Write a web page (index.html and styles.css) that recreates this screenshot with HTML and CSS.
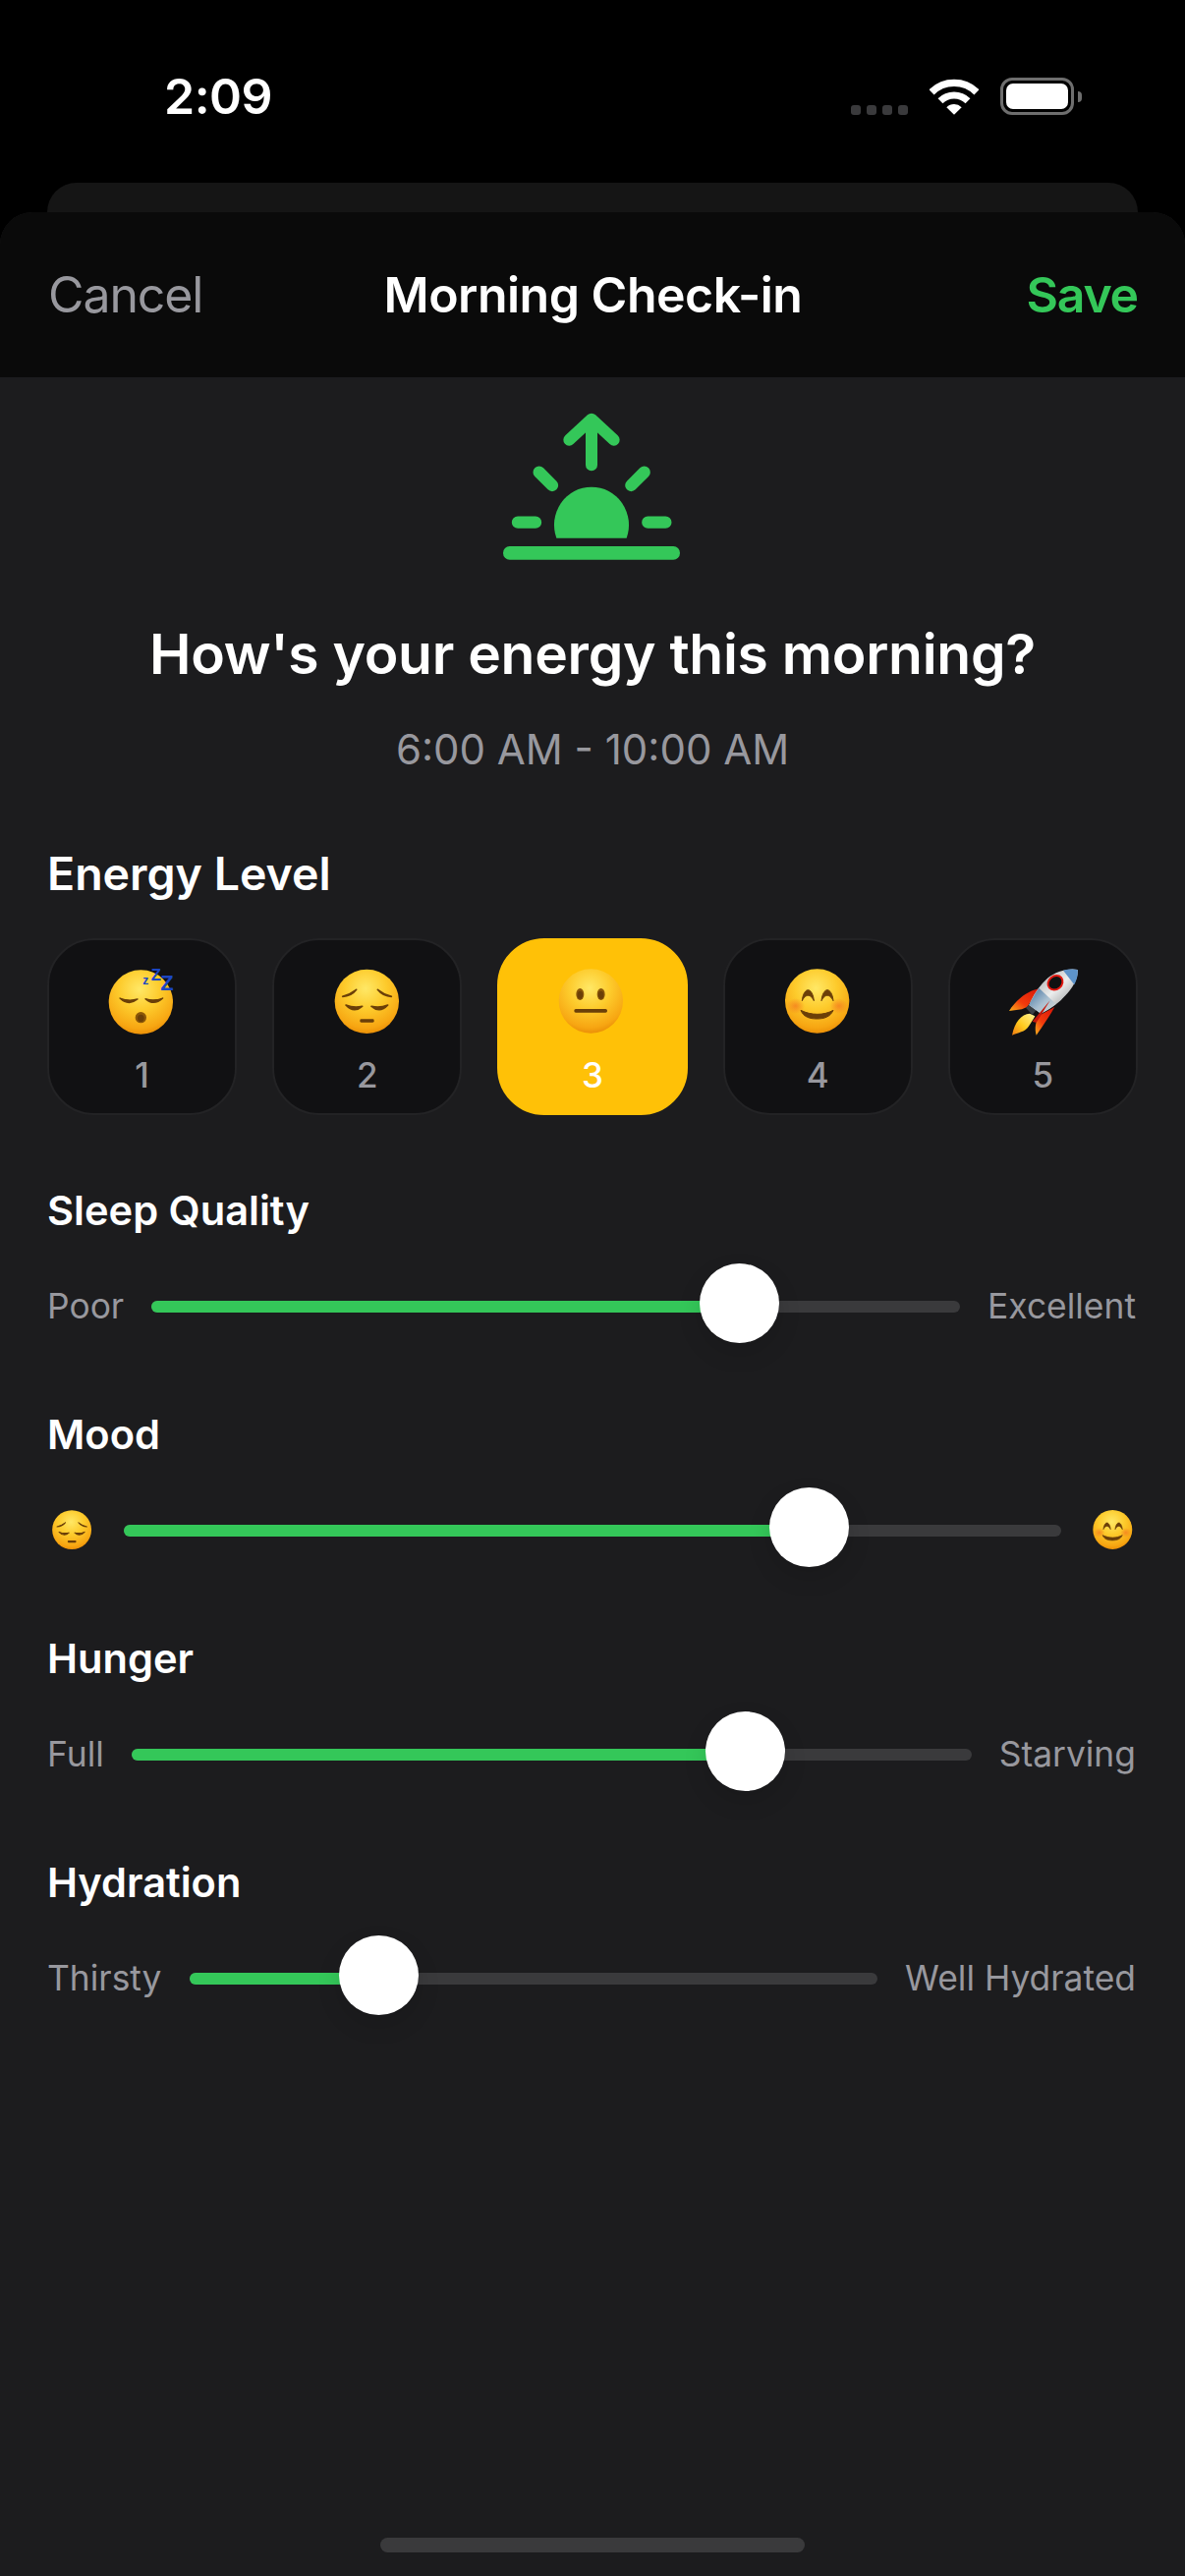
FILE: index.html
```html
<!DOCTYPE html>
<html lang="en">
<head>
    <meta charset="UTF-8">
    <meta name="viewport" content="width=device-width, initial-scale=1.0">
    <title>Morning Check-in</title>
    <link rel="stylesheet" href="styles.css">
</head>
<body>
    <svg class="defs" width="0" height="0" aria-hidden="true">
        <defs>
            <radialGradient id="faceFill" cx="48%" cy="30%" r="72%">
                <stop offset="0" stop-color="#ffe866"/>
                <stop offset="0.45" stop-color="#fdcb2c"/>
                <stop offset="0.85" stop-color="#f7a612"/>
                <stop offset="1" stop-color="#e98b05"/>
            </radialGradient>
            <radialGradient id="blush" cx="50%" cy="50%" r="50%">
                <stop offset="0" stop-color="#f47a20" stop-opacity="0.75"/>
                <stop offset="1" stop-color="#f47a20" stop-opacity="0"/>
            </radialGradient>
            <linearGradient id="rocketSilver" x1="0" y1="0" x2="1" y2="1">
                <stop offset="0" stop-color="#8d8f91"/>
                <stop offset="0.5" stop-color="#eceded"/>
                <stop offset="1" stop-color="#74787a"/>
            </linearGradient>
            <linearGradient id="rocketBlue" x1="0" y1="0" x2="1" y2="1">
                <stop offset="0" stop-color="#3f6f9e"/>
                <stop offset="0.55" stop-color="#a9bfd0"/>
                <stop offset="1" stop-color="#d8d8d4"/>
            </linearGradient>
            <linearGradient id="finFill" x1="1" y1="0" x2="0" y2="1">
                <stop offset="0" stop-color="#d81408"/>
                <stop offset="0.6" stop-color="#f23b0c"/>
                <stop offset="1" stop-color="#fbb21c"/>
            </linearGradient>
            <linearGradient id="flameFill" x1="1" y1="0" x2="0" y2="1">
                <stop offset="0" stop-color="#fff39a"/>
                <stop offset="0.55" stop-color="#ffcc1e"/>
                <stop offset="1" stop-color="#f07a10"/>
            </linearGradient>

            <symbol id="faceSleep" viewBox="0 0 270 255">
                <circle cx="130" cy="135" r="98" fill="url(#faceFill)"/>
                <path d="M66 123Q92 148 120 126Q92 134 66 123Z" fill="#6b3f08" stroke="#6b3f08" stroke-width="4" stroke-linejoin="round"/>
                <path d="M144 125Q170 148 197 123Q170 134 144 125Z" fill="#6b3f08" stroke="#6b3f08" stroke-width="4" stroke-linejoin="round"/>
                <ellipse cx="130" cy="182" rx="17" ry="17" fill="#8a5608"/>
                <ellipse cx="130" cy="184" rx="10" ry="11" fill="#6b3f08"/>
                <text class="zzz" x="136" y="80" font-size="36">z</text>
                <text class="zzz" x="161" y="68" font-size="50">Z</text>
                <text class="zzz" x="190" y="98" font-size="66">Z</text>
            </symbol>

            <symbol id="facePensive" viewBox="-5 0 270 255">
                <circle cx="128" cy="133" r="98" fill="url(#faceFill)"/>
                <path d="M54 118Q76 112 96 97Q80 118 54 118Z" fill="#6b3f08" stroke="#6b3f08" stroke-width="5" stroke-linejoin="round"/>
                <path d="M161 97Q180 112 203 118Q178 118 161 97Z" fill="#6b3f08" stroke="#6b3f08" stroke-width="5" stroke-linejoin="round"/>
                <path d="M64 144Q88 170 114 148Q88 154 64 144Z" fill="#6b3f08" stroke="#6b3f08" stroke-width="5" stroke-linejoin="round"/>
                <path d="M142 148Q168 170 192 144Q168 154 142 148Z" fill="#6b3f08" stroke="#6b3f08" stroke-width="5" stroke-linejoin="round"/>
                <rect x="107" y="187" width="43" height="10" rx="4" fill="#6b3f08"/>
            </symbol>

            <symbol id="faceNeutral" viewBox="0 0 270 255">
                <circle cx="130" cy="132" r="98" fill="url(#faceFill)"/>
                <ellipse cx="97" cy="111" rx="12" ry="18" fill="#8a5608"/>
                <ellipse cx="97" cy="113" rx="8" ry="12" fill="#6b3f08"/>
                <ellipse cx="161" cy="111" rx="12" ry="18" fill="#8a5608"/>
                <ellipse cx="161" cy="113" rx="8" ry="12" fill="#6b3f08"/>
                <rect x="79" y="156" width="101" height="11" rx="5" fill="#6b3f08"/>
            </symbol>

            <symbol id="faceSmile" viewBox="-8 0 270 255">
                <circle cx="126" cy="132" r="98" fill="url(#faceFill)"/>
                <ellipse cx="60" cy="147" rx="28" ry="24" fill="url(#blush)"/>
                <ellipse cx="192" cy="147" rx="28" ry="24" fill="url(#blush)"/>
                <path d="M80 131C82 110 90 98 98 98C106 98 114 110 116 131C110 119 104 115 98 115C92 115 86 119 80 131Z" fill="#6b3f08" stroke="#6b3f08" stroke-width="3" stroke-linejoin="round"/>
                <path d="M139 131C141 110 149 98 157 98C165 98 173 110 175 131C169 119 163 115 157 115C151 115 145 119 139 131Z" fill="#6b3f08" stroke="#6b3f08" stroke-width="3" stroke-linejoin="round"/>
                <path d="M76 160C108 176 146 176 175 160C166 180 148 186 125 186C102 186 84 180 76 160Z" fill="#6b3f08" stroke="#6b3f08" stroke-width="3" stroke-linejoin="round"/>
            </symbol>

            <symbol id="rocket" viewBox="0 0 270 255">
                <path d="M124 94C94 100 56 124 33 162L72 157L88 150Z" fill="url(#finFill)"/>
                <path d="M172 150C160 172 140 202 116 236C110 214 114 194 124 176Z" fill="url(#finFill)"/>
                <path d="M96 170C70 172 50 196 42 236C60 228 82 226 92 210C100 198 108 186 112 178Z" fill="url(#flameFill)"/>
                <path d="M84 152L102 136L120 154L104 174Z" fill="#3a4046"/>
                <path d="M242 36C214 30 174 42 150 62C125 85 105 115 94 144L130 170C154 158 185 138 205 115C228 90 245 62 242 36Z" fill="url(#rocketSilver)"/>
                <path d="M124 92C112 108 102 126 94 144L130 170C146 162 162 152 176 141Z" fill="url(#rocketBlue)"/>
                <path d="M242 36C228 33 212 34 198 38L232 82C240 66 244 50 242 36Z" fill="#5d93c9"/>
                <path d="M158 130L104 194L116 198Z" fill="#c5180c"/>
                <ellipse cx="174" cy="76" rx="24" ry="20" transform="rotate(-40 174 76)" fill="#111" stroke="#e3170f" stroke-width="6"/>
            </symbol>
        </defs>
    </svg>

    <div class="phone">
        <div class="status-bar">
            <div class="clock">2:09</div>
            <div class="status-icons">
                <div class="signal"><span></span><span></span><span></span><span></span></div>
                <svg class="wifi" width="50" height="37" viewBox="0 0 150 110">
                    <path d="M6 41A98 98 0 0 1 144 41" fill="none" stroke="#fff" stroke-width="22"/>
                    <path d="M33 68A60 60 0 0 1 117 68" fill="none" stroke="#fff" stroke-width="21"/>
                    <path d="M75 110L52 87A33 33 0 0 1 98 87Z" fill="#fff"/>
                </svg>
                <div class="battery"><div class="battery-level"></div></div>
            </div>
        </div>

        <div class="back-sheet"></div>

        <div class="sheet">
            <div class="nav-bar">
                <div class="nav-cancel">Cancel</div>
                <div class="nav-title">Morning Check-in</div>
                <div class="nav-save">Save</div>
            </div>

            <div class="content">
                <svg class="sunrise" width="240" height="190" viewBox="0 0 720 570">
                    <path d="M366 220V82M298 143L366 80L434 143" fill="none" stroke="#34c759" stroke-width="36" stroke-linecap="round" stroke-linejoin="round"/>
                    <path d="M206 242L246 282M527 242L487 282M141 395H195M538 395H592" fill="none" stroke="#34c759" stroke-width="37" stroke-linecap="round"/>
                    <path d="M259 443A114 116 0 1 1 473 443Z" fill="#34c759"/>
                    <rect x="96" y="468" width="540" height="41" rx="20" fill="#34c759"/>
                </svg>

                <h1 class="headline">How's your energy this morning?</h1>
                <p class="window">6:00 AM - 10:00 AM</p>

                <h2 class="energy-title">Energy Level</h2>
                <div class="energy-options">
                    <div class="energy-option">
                        <svg class="emoji"><use href="#faceSleep"/></svg>
                        <span class="energy-num">1</span>
                    </div>
                    <div class="energy-option">
                        <svg class="emoji"><use href="#facePensive"/></svg>
                        <span class="energy-num">2</span>
                    </div>
                    <div class="energy-option selected">
                        <svg class="emoji"><use href="#faceNeutral"/></svg>
                        <span class="energy-num">3</span>
                    </div>
                    <div class="energy-option">
                        <svg class="emoji"><use href="#faceSmile"/></svg>
                        <span class="energy-num">4</span>
                    </div>
                    <div class="energy-option">
                        <svg class="emoji"><use href="#rocket"/></svg>
                        <span class="energy-num">5</span>
                    </div>
                </div>

                <section class="metric">
                    <h3 class="metric-title">Sleep Quality</h3>
                    <div class="slider-row">
                        <span class="slider-label">Poor</span>
                        <div class="track" style="--v: 72.7%"><div class="track-fill"></div><div class="thumb"></div></div>
                        <span class="slider-label">Excellent</span>
                    </div>
                </section>

                <section class="metric">
                    <h3 class="metric-title">Mood</h3>
                    <div class="slider-row mood-row">
                        <svg class="emoji-small"><use href="#facePensive"/></svg>
                        <div class="track" style="--v: 73.1%"><div class="track-fill"></div><div class="thumb"></div></div>
                        <svg class="emoji-small"><use href="#faceSmile"/></svg>
                    </div>
                </section>

                <section class="metric">
                    <h3 class="metric-title">Hunger</h3>
                    <div class="slider-row">
                        <span class="slider-label">Full</span>
                        <div class="track" style="--v: 73%"><div class="track-fill"></div><div class="thumb"></div></div>
                        <span class="slider-label">Starving</span>
                    </div>
                </section>

                <section class="metric">
                    <h3 class="metric-title">Hydration</h3>
                    <div class="slider-row">
                        <span class="slider-label">Thirsty</span>
                        <div class="track" style="--v: 27.5%"><div class="track-fill"></div><div class="thumb"></div></div>
                        <span class="slider-label">Well Hydrated</span>
                    </div>
                </section>
            </div>

            <div class="home-bar"></div>
        </div>
    </div>
</body>
</html>
```

FILE: styles.css
```css
* {
    box-sizing: border-box;
}
body {
    margin: 0;
    background-color: #000;
    font-family: Inter, "Noto Sans", "Liberation Sans", sans-serif;
    color: #fff;
}
.defs {
    position: absolute;
}
.phone {
    width: 1206px;
    height: 2622px;
    display: flex;
    flex-direction: column;
    overflow: hidden;
}

/* status bar */
.status-bar {
    height: 186px;
    flex-shrink: 0;
    padding: 0 113px 69px 167px;
    display: flex;
    justify-content: space-between;
    align-items: flex-end;
}
.clock {
    font-size: 50px;
    line-height: 50px;
    font-weight: 600;
    margin-bottom: -6px;
    letter-spacing: -0.5px;
}
.status-icons {
    display: flex;
    align-items: flex-end;
    gap: 22px;
}
.signal {
    display: flex;
    gap: 6px;
}
.signal span {
    width: 10px;
    height: 10px;
    border-radius: 3px;
    background-color: #3a3a3c;
}
.battery {
    width: 75px;
    height: 38px;
    border: 3px solid #6e6e6e;
    border-radius: 12px;
    padding: 3px;
    position: relative;
}
.battery::after {
    content: "";
    position: absolute;
    right: -11px;
    top: 11px;
    width: 4px;
    height: 11px;
    background-color: #6e6e6e;
    border-radius: 0 4px 4px 0;
}
.battery-level {
    height: 100%;
    background-color: #fff;
    border-radius: 7px;
}

/* sheets */
.back-sheet {
    height: 30px;
    flex-shrink: 0;
    margin: 0 48px;
    background-color: #151515;
    border-radius: 33px 33px 0 0;
}
.sheet {
    flex: 1;
    display: flex;
    flex-direction: column;
    background-color: #1c1c1e;
    border-radius: 33px 33px 0 0;
    overflow: hidden;
}
.nav-bar {
    height: 168px;
    flex-shrink: 0;
    padding: 0 48px 0 49px;
    display: grid;
    grid-template-columns: 1fr auto 1fr;
    align-items: center;
    background-color: #0a0a0a;
    font-size: 50px;
}
.nav-cancel {
    color: #98989e;
    letter-spacing: -1.1px;
}
.nav-title {
    font-weight: 600;
    letter-spacing: -0.5px;
}
.nav-save {
    justify-self: end;
    color: #34c759;
    font-weight: 600;
    letter-spacing: -1.2px;
}

/* main content */
.content {
    flex: 1;
    padding: 16px 48px 0;
}
.sunrise {
    display: block;
    margin-left: 432px;
}
.headline {
    margin: 41px 0 0;
    text-align: center;
    font-size: 57px;
    line-height: 70px;
    font-weight: 600;
    letter-spacing: -0.28px;
}
.window {
    margin: 36px 0 0;
    text-align: center;
    font-size: 42px;
    line-height: 52px;
    color: #98989e;
}
.energy-title {
    margin: 70px 0 0;
    font-size: 46.5px;
    line-height: 60px;
    font-weight: 600;
}
.energy-options {
    margin-top: 36px;
    display: grid;
    grid-template-columns: repeat(5, 1fr);
    gap: 36px;
}
.energy-option {
    height: 180px;
    padding-top: 18px;
    display: flex;
    flex-direction: column;
    align-items: center;
    background-color: #111113;
    border: 2px solid #232325;
    border-radius: 48px;
}
.energy-option.selected {
    background-color: #ffc107;
    border-color: #ffc107;
}
.emoji {
    width: 90px;
    height: 85px;
    display: block;
}
.energy-num {
    margin-top: 13px;
    font-size: 35px;
    line-height: 42px;
    font-weight: 500;
    color: #98989e;
}
.selected .energy-num {
    color: #fff;
}
.metric {
    height: 228px;
}
.metric:first-of-type {
    margin-top: 67px;
}
.metric-title {
    margin: 0;
    font-size: 41.6px;
    line-height: 60px;
    font-weight: 600;
}
.slider-row {
    margin-top: 38px;
    height: 60px;
    padding-right: 2px;
    display: flex;
    align-items: center;
    gap: 28px;
}
.mood-row {
    gap: 32px;
    padding: 0 5px;
}
.slider-label {
    font-size: 35.4px;
    margin-top: -2px;
    color: #98989e;
}
.emoji-small {
    width: 55px;
    height: 52px;
    margin: -5px -7px 0 -7px;
    flex-shrink: 0;
}
.track {
    flex: 1;
    height: 12px;
    position: relative;
    background-color: #3a3a3c;
    border-radius: 6px;
}
.track-fill {
    width: var(--v);
    height: 100%;
    background-color: #34c759;
    border-radius: 6px;
}
.thumb {
    position: absolute;
    left: var(--v);
    top: -38px;
    width: 81px;
    height: 81px;
    margin-left: -40px;
    background-color: #fff;
    border-radius: 50%;
    box-shadow: 0 10px 24px rgba(0, 0, 0, 0.12);
}
.home-bar {
    width: 432px;
    height: 15px;
    flex-shrink: 0;
    margin: 0 auto 24px;
    background-color: #3a3a3c;
    border-radius: 8px;
}
.zzz {
    font-family: "Liberation Sans", sans-serif;
    font-weight: 700;
    fill: #1b46c4;
}
```
